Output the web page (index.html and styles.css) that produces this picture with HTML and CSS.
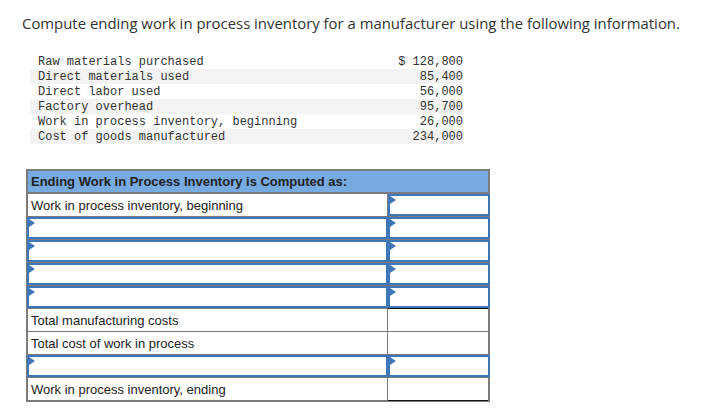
FILE: index.html
```html
<!DOCTYPE html>
<html>
<head>
<meta charset="utf-8">
<link rel="stylesheet" href="styles.css">
</head>
<body>
<p class="title">Compute ending work in process inventory for a manufacturer using the following information.</p>
<div class="data">
  <div class="drow"><span>Raw materials purchased</span><span>$ 128,800</span></div>
  <div class="drow alt"><span>Direct materials used</span><span>85,400</span></div>
  <div class="drow"><span>Direct labor used</span><span>56,000</span></div>
  <div class="drow alt"><span>Factory overhead</span><span>95,700</span></div>
  <div class="drow"><span>Work in process inventory, beginning</span><span>26,000</span></div>
  <div class="drow alt"><span>Cost of goods manufactured</span><span>234,000</span></div>
</div>
<div class="sheet">
  <div class="head">Ending Work in Process Inventory is Computed as:</div>
  <div class="row"><div class="lbl">Work in process inventory, beginning</div><div class="val"><div class="inp"></div></div></div>
  <div class="row"><div class="lbl"><div class="inp"></div></div><div class="val"><div class="inp"></div></div></div>
  <div class="row"><div class="lbl"><div class="inp"></div></div><div class="val"><div class="inp"></div></div></div>
  <div class="row"><div class="lbl"><div class="inp"></div></div><div class="val"><div class="inp"></div></div></div>
  <div class="row"><div class="lbl"><div class="inp"></div></div><div class="val"><div class="inp"></div></div></div>
  <div class="row"><div class="lbl">Total manufacturing costs</div><div class="val top"></div></div>
  <div class="row"><div class="lbl">Total cost of work in process</div><div class="val"></div></div>
  <div class="row"><div class="lbl"><div class="inp"></div></div><div class="val"><div class="inp"></div></div></div>
  <div class="row last"><div class="lbl">Work in process inventory, ending</div><div class="val dbl"></div></div>
</div>
</body>
</html>
```
FILE: styles.css
```css
body {
  margin: 0;
  padding: 13px 0 0 22px;
  font-family: "Open Sans", "Liberation Sans", sans-serif;
  color: #222;
  background: #fff;
}
.title {
  margin: 0;
  font-size: 14.9px;
  line-height: 20px;
  color: #333;
}
.data {
  margin: 21px 0 0 8px;
  width: 434px;
  font-family: "Liberation Mono", monospace;
  font-size: 12px;
  color: #333;
}
.drow {
  display: flex;
  justify-content: space-between;
  height: 15px;
  line-height: 16px;
  padding: 0 1px 0 8px;
}
.drow.alt { background: #f3f3f3; }
.sheet {
  margin: 25px 0 0 4px;
  width: 460px;
  border: 2px solid #7b7b7b;
  border-bottom: 0;
  font-family: "Liberation Sans", Arial, sans-serif;
  font-size: 13px;
  color: #222;
}
.head {
  background: #78aae2;
  height: 21px;
  line-height: 22px;
  padding-left: 3px;
  font-weight: bold;
  border-bottom: 2px solid #7b7b7b;
}
.row {
  display: flex;
  height: 22px;
  border-bottom: 1px solid #7b7b7b;
}
.row.last { border-bottom: 2px solid #7b7b7b; }
.lbl {
  box-sizing: border-box;
  width: 360px;
  flex: none;
  padding-left: 3px;
  line-height: 23px;
  border-right: 1px solid #7b7b7b;
  position: relative;
}
.lbl:has(.inp) { padding-left: 0; }
.val {
  flex: 1;
  position: relative;
}
.inp {
  position: absolute;
  inset: 0 0 0 0;
  border: 2px solid #3f76b8;
  background: #fff;
}
.lbl .inp { left: -1px; right: -1px; }
.val .inp { left: 0; right: -2px; }
.inp::before {
  content: "";
  position: absolute;
  left: 0;
  top: 0;
  border-left: 6px solid #3f76b8;
  border-top: 4px solid transparent;
  border-bottom: 4px solid transparent;
}
.val.top { border-top: 1px solid #111; margin-top: -1px; }
.val.dbl::after {
  content: "";
  position: absolute;
  left: 0;
  right: 0;
  bottom: -3px;
  height: 1px;
  border-top: 1px solid #111;
  border-bottom: 1px solid #111;
}
```
